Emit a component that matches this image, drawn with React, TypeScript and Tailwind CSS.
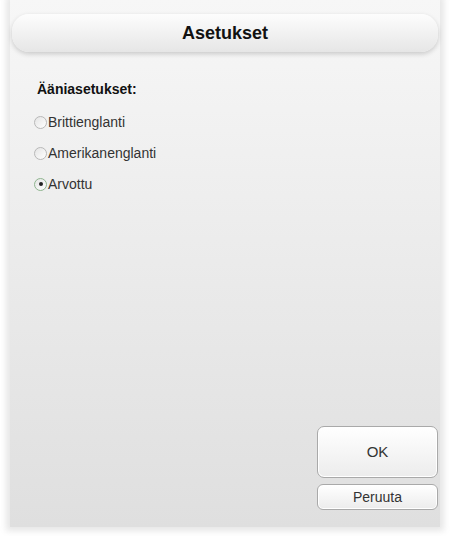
import { useState } from "react"

const options = ["Brittienglanti", "Amerikanenglanti", "Arvottu"]

const Radio = ({ checked }: { checked: boolean }) => (
  <span
    className={`flex h-[13px] w-[13px] items-center justify-center rounded-full border bg-gradient-to-br from-[#e4e4e4] to-[#ffffff] ${
      checked ? "border-[#8fb58f]" : "border-[#b8b8b8]"
    }`}
  >
    {checked && <span className="h-[4px] w-[4px] rounded-full bg-[#222]" />}
  </span>
)

const App = () => {
  const [selected, setSelected] = useState("Arvottu")

  return (
    <div className="h-[536px] w-[450px] bg-white font-['Liberation_Sans',Arial,sans-serif]">
      <div className="mx-[10px] flex h-[527px] flex-col bg-gradient-to-b from-[#f7f7f7] to-[#dfdfdf] pt-[6px] shadow-[0_0_6px_4px_rgba(228,228,228,0.9)]">
        <div className="mx-[2px] mt-[8px] flex h-[38px] items-center justify-center rounded-[17px] bg-gradient-to-b from-[#fdfdfd] to-[#e6e6e6] shadow-[0_2px_5px_rgba(0,0,0,0.18)]">
          <h1 className="text-[18px] font-bold text-[#111]">Asetukset</h1>
        </div>

        <div className="pl-[27px] pt-[27px]">
          <div className="mb-[13px] text-[14px] font-bold text-[#111]">Ääniasetukset:</div>
          <div className="-ml-[3px] flex flex-col gap-[13px]">
            {options.map((opt) => (
              <label
                key={opt}
                className="flex h-[18px] cursor-pointer items-center gap-[1px] text-[14px] text-[#333]"
                onClick={() => setSelected(opt)}
              >
                <Radio checked={selected === opt} />
                {opt}
              </label>
            ))}
          </div>
        </div>

        <div className="flex-1" />

        <div className="flex flex-col items-end gap-[6px] pb-[17px] pr-[2px]">
          <button className="h-[52px] w-[121px] rounded-[7px] border border-[#a9a9a9] bg-gradient-to-b from-[#ffffff] to-[#ececec] text-[15px] text-[#333] shadow-[inset_0_0_0_1px_#fff]">
            OK
          </button>
          <button className="h-[26px] w-[121px] rounded-[6px] border border-[#a9a9a9] bg-gradient-to-b from-[#ffffff] to-[#ececec] text-[14px] text-[#333] shadow-[inset_0_0_0_1px_#fff]">
            Peruuta
          </button>
        </div>
      </div>
    </div>
  )
}

export default App
